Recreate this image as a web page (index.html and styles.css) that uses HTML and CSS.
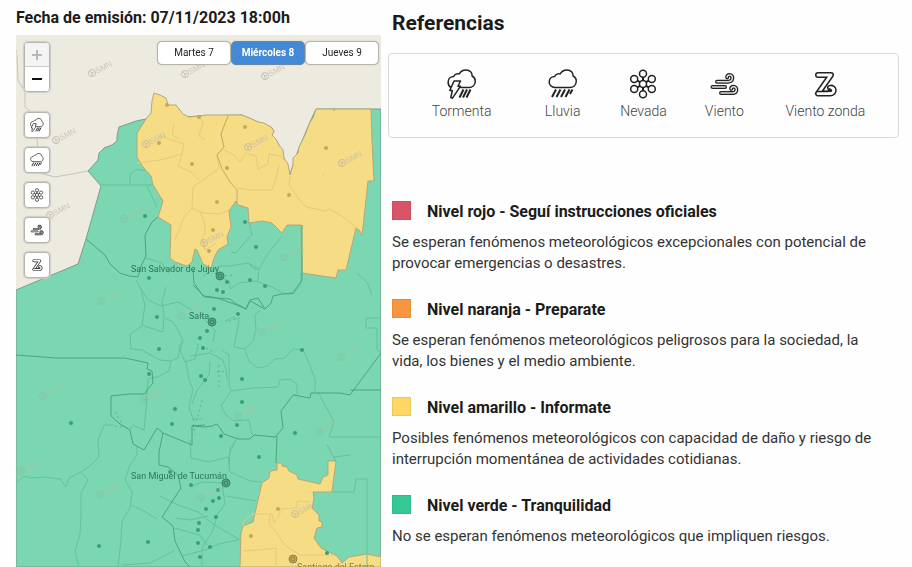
FILE: index.html
```html
<!DOCTYPE html>
<html lang="es">
<head>
<meta charset="utf-8">
<meta name="viewport" content="width=device-width, initial-scale=1">
<title>Alertas meteorológicas</title>
<link rel="stylesheet" href="styles.css">
</head>
<body>
<svg class="sprite" aria-hidden="true">
  <symbol id="i-storm" viewBox="0 0 30 30">
    <path d="M4 18.5C2 17.5 1 15 1.2 12.5C1.5 9.5 4 7.600 6.700 7.600C7.500 5.500 10 4.300 12.200 4.900C13.500 2.500 16 1 19 1C23 1 25.300 3.800 25.100 7C27.500 8.200 28.500 10.500 28.200 13C27.900 16.300 25.300 18.500 22 18.500H13.500M7 12H13.500L11 17.200H13.500L5.500 29.200L3.800 28.500L5.300 21.500H2.800Z"/>
    <path class="heavy" d="M16.500 20.500L12.500 28.500M20 20.500L16 28.500M23.500 20.500L19.500 28.500"/>
  </symbol>
  <symbol id="i-rain" viewBox="0 0 30 30">
    <path d="M6.500 18.500C3.300 18 1 15.600 1.200 12.500C1.500 9.500 4 7.600 6.700 7.600C7.500 5.500 10 4.300 12.200 4.900C13.500 2.500 16 1 19 1C23 1 25.300 3.800 25.100 7C27.500 8.200 28.500 10.500 28.200 13C27.900 16.300 25.300 18.500 22 18.500Z"/>
    <path class="heavy" d="M8 20.500L4 28M12.500 20.500L8.500 28M17 20.500L13 28M21.500 20.500L17.500 28M24.500 20.500L22 25"/>
  </symbol>
  <symbol id="i-snow" viewBox="0 0 30 30">
    <g>
      <circle cx="15" cy="15" r="3.500"/><circle cx="15" cy="4.800" r="3.500"/><circle cx="15" cy="25.200" r="3.500"/>
      <circle cx="6.200" cy="9.900" r="3.500"/><circle cx="23.800" cy="9.900" r="3.500"/>
      <circle cx="6.200" cy="20.100" r="3.500"/><circle cx="23.800" cy="20.100" r="3.500"/>
    </g>
    <path class="heavy" d="M15 8.300V11.500M15 18.500V21.700M9.200 11.600L12 13.200M20.800 11.600L18 13.200M9.200 18.400L12 16.800M20.800 18.400L18 16.800"/>
  </symbol>
  <symbol id="i-wind" viewBox="0 0 30 30">
    <g class="tube">
      <path d="M8 12.700H19C24.500 12.700 24.500 6 20.500 6C18.700 6 18 7.200 18.200 8.300"/>
      <path d="M3.500 18H16"/>
      <path d="M12 24H23.500C28.500 24 28.500 17.700 24.500 17.700C22.700 17.700 22 18.800 22.200 19.900"/>
    </g>
    <g class="tube-fill">
      <path d="M8 12.700H19C24.500 12.700 24.500 6 20.500 6C18.700 6 18 7.200 18.200 8.300"/>
      <path d="M3.500 18H16"/>
      <path d="M12 24H23.500C28.500 24 28.500 17.700 24.500 17.700C22.700 17.700 22 18.800 22.200 19.900"/>
    </g>
  </symbol>
  <symbol id="i-zonda" viewBox="0 0 30 30">
    <path class="z-line" d="M8 6H21L8 24.500H20C25.500 24.500 24.500 17.500 20 18.800"/>
    <path class="z-fill" d="M8 6H21L8 24.500H20C25.500 24.500 24.500 17.500 20 18.800"/>
    <path d="M7 22.500H18C21 22.500 21 19.500 19 19.800"/>
  </symbol>
  <symbol id="mark" viewBox="-6 -18 36 28" overflow="visible">
    <circle r="3.500"/><path d="M-2 -2L0 0V3M0 0L2 -1"/>
    <text transform="rotate(-28)" x="4" y="3">SMN</text>
  </symbol>
</svg>

<main class="page">
  <section class="alerts">
    <h2 class="issued">Fecha de emisión: 07/11/2023 18:00h</h2>
    <div class="map">
      <svg class="map-art" viewBox="16 35 365 532" preserveAspectRatio="xMidYMid slice" role="img" aria-label="Mapa de alertas">
        <path class="land-line" d="M16 54V50M17 55L18 80L25 92V107L32 113M37 137L39 173L55 177L72 174L88 171"/>
        <path class="green" d="M16 290L78 264L86 239L101 186L88 171L98 160L99 153L104 148L112 145L117 141L117 136L119 127L136 121L146 119L200 116L242 115L258 122L271 127L274 131L272 135L279 145L290 175L293 165L299 148L310 122L316 109H381V567H16Z"/>
        <path class="yellow" d="M154 93L160 95L166 98L168 105L176 105L183 114L189 117L200 116L206 115L242 115L252 119L258 122L264 123L271 127L274 131L272 135L276 139L279 145L283 150L284 158L288 164L290 175L293 165L293 158L298 153L299 147L305 135L310 122L313 118L316 109L371 109L372 140L374 181L368 181L362 236L360 231L356 228L346 270L338 270L336 278L302 273L301 225H287L282 233L272 223L262 221L249 223L248 208L238 205L236 201L229 211L231 227L227 237L228 244L218 250L214 258L211 268L203 264L197 250L195 249L192 262L187 266L175 262L170 258L171 225L158 217L163 201L153 185L151 176L143 167L137 157V133L146 119L151 113L152 101Z"/>
        <path class="yellow" d="M277 463H282V466L287 467L289 471L297 475L298 479L320 484L323 477L328 475V461H336L332 492H313L314 498L312 508L319 515V521L322 522V527L317 528L314 538L321 548L337 556L342 563L349 557L367 554L381 557V567H240L241 533L243 526L253 522L262 483L269 478L270 471L277 470Z"/>
        <path class="minor-y" d="M137 163L160 160L182 154L184 144L166 138L160 136M182 154L178 166L191 172L199 180M199 116L203 122L199 136L205 140M228 116L221 134L224 147L217 155L219 168L206 178L193 187L192 208L184 217L175 240M192 208L204 213L219 214L229 210M200 212L205 224V233L202 238L205 250L216 243M224 150L234 155L240 162L246 153L256 156L258 169L268 164L269 154L280 156L284 160M238 188L250 190L272 190L276 178L279 165M290 176L289 185L298 198L306 207L325 211L330 209L345 218L356 228M174 124L172 135L180 139M243 526V522L252 514H272L274 523L278 517L281 511M270 515L269 523L278 535L285 545L292 550L300 555H334M280 509L297 508V501L310 502M243 551L270 549L276 548V567M323 174V177"/>
        <path class="major-y" d="M228 116L221 134L224 147L217 155L222 169L230 182L237 190V203"/>
        <path class="minor" d="M101 185H153M130 185V174L137 169L145 171M147 186L157 207M146 258L162 263L169 274M136 280L141 289L148 300L161 306L178 302L192 310M141 290L145 305L142 325L150 328L163 332L164 316L162 302L166 287M142 326L130 334L131 349L142 350L160 360L171 361L178 358L180 345L183 341L178 330L173 322L165 318M171 361L169 371L157 377L148 379L146 409L144 430L132 425M183 341L180 350L185 362L195 359L198 346M186 362L189 380L193 389L189 407L193 419H203M203 276L219 266H230L248 263L259 269L267 255L281 237M249 222L252 235L244 243L237 252L231 253M248 263L254 269L259 269L258 280M220 276L230 282V289L239 283L256 281L274 288L284 294L293 294L301 284V273M260 310L255 315L256 330L253 341L245 349L234 347L239 321L234 317L225 321M245 350L249 361L258 368L267 366L275 359L285 358L293 349L303 350L309 363L315 379L315 392M222 350L229 355V385L231 391L253 388L278 387L280 380L290 379L297 384V395M231 391L221 406L226 415L234 421L249 420L252 435M200 315L210 325L215 330L213 342M190 356L210 353L223 360L226 370L227 380M210 362L209 375L197 390L192 404M114 425H104L98 440L99 457L91 465L81 472L69 478L66 487L60 479L44 477L30 478L24 476L16 483M81 472L88 480L81 493V513L80 534L75 551L79 567M137 446V455L130 465L125 480L132 492L130 508L122 521L121 540L118 567M131 505L144 511L157 519M122 565L150 563L174 551M190 440L191 458L209 462L228 457L230 472L250 481L261 482M229 455L235 442M239 436L230 448L229 470M160 496L178 505L198 512L213 524L240 540M176 518L190 520L208 516M174 528L200 535L207 545M182 556L205 550L219 544L238 540M190 487L202 482L226 483M222 483L225 504L217 515L213 530L202 548V567M226 496L250 500L256 501M334 457L350 455M330 437H381M327 445L336 461M333 492H354L356 479H367V567M366 318H381M366 318V328H377V350L381 352M357 273L367 282L372 295M318 392L326 407L334 421L329 437"/>
        <path class="dots" d="M220 276L235 275M202 400L196 422M197 344L214 352M219 365V390M240 318L225 322M217 372L227 371M193 419L195 435M115 412L124 427M132 428L113 426"/>
        <path class="major" d="M86 239L105 255L110 264L120 273L129 276L138 277L141 266L146 256L145 235L152 222L158 217M16 355L56 358H125L148 363L147 369L152 371L153 383L147 390L145 394H129L111 396V416L120 424L130 430L133 444L144 450L150 440L157 428L163 433L192 445V426L205 425M163 433L159 452V465L168 467L178 475L181 488L162 517L173 526L175 541L185 562L190 567M193 269L194 283L203 296L212 297L220 299L237 305L246 309L250 300L258 298L265 309L271 303L273 296L282 294L293 293L302 280V225M265 309L250 301L246 309L235 303L230 299L205 297L193 285M192 426L204 427L212 426L217 424L224 434L238 439L250 439L254 435L275 437L283 428L281 411L293 395L310 398L311 393L340 393L350 395L381 353M350 390H381M277 436L276 463"/>
        <g class="towns">
          <circle cx="167" cy="105" r="2"/><circle cx="199" cy="117" r="2"/><circle cx="245" cy="127" r="2"/><circle cx="334" cy="110" r="1"/><circle cx="159" cy="143" r="2"/><circle cx="192" cy="164" r="2"/><circle cx="227" cy="168" r="2"/><circle cx="326" cy="148" r="2"/><circle cx="289" cy="195" r="2"/><circle cx="217" cy="202" r="2"/><circle cx="213" cy="230" r="2"/><circle cx="209" cy="251" r="2"/><circle cx="278" cy="509" r="2"/><circle cx="251" cy="536" r="2"/>
        </g>
        <g class="towns towns-g">
          <circle cx="145" cy="216" r="2"/><circle cx="245" cy="222" r="2"/><circle cx="256" cy="247" r="2"/><circle cx="149" cy="278" r="2"/><circle cx="227" cy="282" r="2"/><circle cx="250" cy="280" r="2"/><circle cx="265" cy="286" r="2"/><circle cx="217" cy="290" r="2"/><circle cx="223" cy="292" r="2"/><circle cx="214" cy="309" r="2"/><circle cx="238" cy="314" r="2"/><circle cx="157" cy="317" r="2"/><circle cx="159" cy="349" r="2"/><circle cx="149" cy="374" r="2"/><circle cx="207" cy="331" r="2"/><circle cx="200" cy="338" r="2"/><circle cx="203" cy="348" r="2"/><circle cx="302" cy="350" r="2"/><circle cx="201" cy="376" r="2"/><circle cx="205" cy="380" r="2"/><circle cx="242" cy="379" r="2"/><circle cx="242" cy="402" r="2"/><circle cx="237" cy="425" r="2"/><circle cx="221" cy="436" r="2"/><circle cx="175" cy="409" r="2"/><circle cx="172" cy="424" r="2"/><circle cx="71" cy="423" r="2"/><circle cx="295" cy="433" r="2"/><circle cx="259" cy="457" r="2"/><circle cx="170" cy="472" r="2"/><circle cx="191" cy="485" r="2"/><circle cx="218" cy="490" r="2"/><circle cx="213" cy="501" r="2"/><circle cx="219" cy="498" r="2"/><circle cx="206" cy="509" r="2"/><circle cx="216" cy="517" r="2"/><circle cx="199" cy="523" r="2"/><circle cx="198" cy="530" r="2"/><circle cx="198" cy="543" r="2"/><circle cx="210" cy="547" r="2"/><circle cx="200" cy="557" r="2"/><circle cx="148" cy="542" r="2"/><circle cx="99" cy="546" r="2"/><circle cx="327" cy="553" r="2"/>
        </g>
        <g class="capital"><circle cx="220" cy="276" r="4"/><circle cx="220" cy="276" r="2"/><circle cx="212" cy="322" r="4"/><circle cx="212" cy="322" r="2"/><circle cx="226" cy="483" r="4"/><circle cx="226" cy="483" r="2"/></g>
        <g class="capital capital-y"><circle cx="293" cy="559" r="4"/><circle cx="293" cy="559" r="2"/></g>
        <g class="marks">
          <use href="#mark" x="86" y="55" width="36" height="28"/><use href="#mark" x="179" y="56" width="36" height="28"/><use href="#mark" x="259" y="58" width="36" height="28"/><use href="#mark" x="50" y="122" width="36" height="28"/><use href="#mark" x="140" y="126" width="36" height="28"/><use href="#mark" x="242" y="129" width="36" height="28"/><use href="#mark" x="336" y="145" width="36" height="28"/><use href="#mark" x="44" y="197" width="36" height="28"/><use href="#mark" x="198" y="225" width="36" height="28"/><use href="#mark" x="289" y="496" width="36" height="28"/>
        </g>
        <g class="marks marks-g">
          <use href="#mark" x="118" y="201" width="36" height="28"/><use href="#mark" x="278" y="239" width="36" height="28"/><use href="#mark" x="95" y="283" width="36" height="28"/><use href="#mark" x="175" y="298" width="36" height="28"/><use href="#mark" x="256" y="314" width="36" height="28"/><use href="#mark" x="335" y="339" width="36" height="28"/><use href="#mark" x="37" y="378" width="36" height="28"/><use href="#mark" x="138" y="382" width="36" height="28"/><use href="#mark" x="232" y="398" width="36" height="28"/><use href="#mark" x="313" y="413" width="36" height="28"/><use href="#mark" x="15" y="453" width="36" height="28"/><use href="#mark" x="94" y="477" width="36" height="28"/><use href="#mark" x="195" y="480" width="36" height="28"/>
        </g>
        <g class="cities">
          <text x="131" y="272">San Salvador de Jujuy</text>
          <text x="189" y="319">Salta</text>
          <text x="131" y="479">San Miguel de Tucumán</text>
          <text class="city-y" x="297" y="570">Santiago del Estero</text>
        </g>
      </svg>

      <div class="tools">
        <div class="zoom">
          <button type="button" class="zoom-btn" aria-label="Acercar" disabled><svg viewBox="0 0 12 12"><path d="M1 6H11M6 1V11"/></svg></button>
          <button type="button" class="zoom-btn" aria-label="Alejar"><svg viewBox="0 0 12 12"><path d="M1 6H11"/></svg></button>
        </div>
        <button type="button" class="tool" aria-label="Tormenta"><svg class="icon"><use href="#i-storm"/></svg></button>
        <button type="button" class="tool" aria-label="Lluvia"><svg class="icon"><use href="#i-rain"/></svg></button>
        <button type="button" class="tool" aria-label="Nevada"><svg class="icon"><use href="#i-snow"/></svg></button>
        <button type="button" class="tool" aria-label="Viento"><svg class="icon"><use href="#i-wind"/></svg></button>
        <button type="button" class="tool" aria-label="Viento zonda"><svg class="icon"><use href="#i-zonda"/></svg></button>
      </div>

      <div class="days">
        <button type="button" class="day">Martes 7</button>
        <button type="button" class="day day-on" aria-pressed="true">Miércoles 8</button>
        <button type="button" class="day">Jueves 9</button>
      </div>
    </div>
  </section>

  <section class="refs">
    <h1 class="refs-title">Referencias</h1>
    <ul class="legend">
      <li class="legend-item"><svg class="icon"><use href="#i-storm"/></svg><span>Tormenta</span></li>
      <li class="legend-item"><svg class="icon"><use href="#i-rain"/></svg><span>Lluvia</span></li>
      <li class="legend-item"><svg class="icon"><use href="#i-snow"/></svg><span>Nevada</span></li>
      <li class="legend-item"><svg class="icon"><use href="#i-wind"/></svg><span>Viento</span></li>
      <li class="legend-item"><svg class="icon"><use href="#i-zonda"/></svg><span>Viento zonda</span></li>
    </ul>
    <div class="levels">
      <article class="level">
        <h3 class="level-title"><span class="swatch red"></span>Nivel rojo - Seguí instrucciones oficiales</h3>
        <p class="level-text">Se esperan fenómenos meteorológicos excepcionales con potencial de provocar emergencias o desastres.</p>
      </article>
      <article class="level">
        <h3 class="level-title"><span class="swatch orange"></span>Nivel naranja - Preparate</h3>
        <p class="level-text">Se esperan fenómenos meteorológicos peligrosos para la sociedad, la vida, los bienes y el medio ambiente.</p>
      </article>
      <article class="level">
        <h3 class="level-title"><span class="swatch amber"></span>Nivel amarillo - Informate</h3>
        <p class="level-text">Posibles fenómenos meteorológicos con capacidad de daño y riesgo de interrupción momentánea de actividades cotidianas.</p>
      </article>
      <article class="level">
        <h3 class="level-title"><span class="swatch mint"></span>Nivel verde - Tranquilidad</h3>
        <p class="level-text">No se esperan fenómenos meteorológicos que impliquen riesgos.</p>
      </article>
    </div>
  </section>
</main>
</body>
</html>
```
FILE: styles.css
```css
* { box-sizing: border-box; }

body {
  margin: 0;
  background: #fefefe;
  color: #1b1b1b;
  font-family: Roboto, "Liberation Sans", sans-serif;
}

h1, h2, h3, p, ul { margin: 0; padding: 0; }
ul { list-style: none; }
button { font-family: inherit; padding: 0; cursor: pointer; }

.sprite { display: none; }

.page {
  display: grid;
  grid-template-columns: minmax(0, 5fr) minmax(0, 7fr);
  column-gap: 7px;
  min-height: 100vh;
  padding: 0 13px 0 16px;
}

/* Map column */
.alerts { display: flex; flex-direction: column; }
.issued {
  padding: 6px 0 5px;
  font-size: 16px;
  line-height: 24px;
  font-weight: 700;
}
.map {
  position: relative;
  flex: 1;
  overflow: hidden;
  background: #edebe0;
}
.map-art {
  position: absolute;
  inset: 0;
  width: 100%;
  height: 100%;
  fill: none;
}
.green { fill: #7bd6b2; stroke: #7b9d8c; stroke-width: 1; }
.yellow { fill: #f6dc85; stroke: #b5a878; stroke-width: 1; }
.land-line { stroke: #c6c5bb; }
.minor { stroke: #66c09e; stroke-width: 1; }
.minor-y { stroke: #e4cb7b; stroke-width: 1; }
.major-y { stroke: #c4ac66; stroke-width: 1; }
.dots { stroke: #58b28f; stroke-width: 1; stroke-dasharray: 2 3; }
.major { stroke: #4ba482; stroke-width: 1; stroke-linejoin: round; }
.towns { fill: #c4a956; }
.towns-g { fill: #3c9e79; }
.capital { stroke: #328467; stroke-width: 1; fill: #58a98b; }
.capital-y { stroke: #93803f; fill: #c4a95a; }
.marks { stroke: #b9b5a5; opacity: 0.8; }
.marks-g { stroke: #8cae98; opacity: 0.4; }
#mark text { font: 8px "Liberation Sans", sans-serif; fill: #c0bcac; stroke: none; }
.cities { font: 9px Roboto, sans-serif; fill: #2c765c; }
.city-y { fill: #8a7b43; }

/* Shared icons */
.icon {
  display: block;
  width: 30px;
  height: 30px;
  fill: none;
  stroke: #222;
  stroke-width: 1.5;
  stroke-linejoin: round;
}
.heavy { stroke-width: 2; }
.tube { stroke-width: 4; stroke-linecap: round; }
.tube-fill { stroke: #ddd; stroke-width: 1.5; stroke-linecap: round; }
.z-line { stroke-width: 6; stroke-linecap: round; }
.z-fill { stroke: #fff; stroke-width: 3; stroke-linecap: round; }

/* Map controls */
.tools {
  position: absolute;
  top: 7px;
  left: 8px;
  display: flex;
  flex-direction: column;
  gap: 9px;
}
.zoom {
  margin-bottom: 11px;
  border: 1px solid #b5b5ac;
  border-radius: 4px;
  overflow: hidden;
  box-shadow: 0 0 1px 1px #cfcec4;
}
.zoom-btn {
  display: grid;
  place-items: center;
  width: 24px;
  height: 24px;
  border: 0;
  background: #fff;
}
.zoom-btn svg { width: 12px; height: 12px; stroke: #111; stroke-width: 2; }
.zoom-btn:disabled { background: #f4f4f4; border-bottom: 1px solid #ccc; }
.zoom-btn:disabled svg { stroke: #b8b8b8; }
.tool {
  display: grid;
  place-items: center;
  width: 26px;
  height: 26px;
  border: 1px solid #b5b5ac;
  border-radius: 4px;
  background: #fff;
  box-shadow: 0 0 1px 1px #cfcec4;
}
.tool .icon { width: 14px; height: 14px; }

.days {
  position: absolute;
  top: 6px;
  right: 2px;
  left: 141px;
  display: grid;
  grid-template-columns: repeat(3, 1fr);
}
.day {
  height: 24px;
  border: 1px solid #b5b5ac;
  border-radius: 5px;
  background: #fff;
  color: #222;
  font-size: 10px;
  line-height: 12px;
  box-shadow: 0 0 1px #999;
}
.day-on { background: #4489d6; color: #fff; font-weight: 700; border-color: #6c87a5; }

/* References column */
.refs-title {
  padding: 8px 4px 15px;
  font-size: 21px;
  line-height: 30px;
  font-weight: 700;
}
.legend {
  display: grid;
  grid-template-columns: 3fr 2fr 2fr 2fr 3fr;
  padding: 15px 12px;
  border: 1px solid #d8dadd;
  border-radius: 4px;
}
.legend-item {
  display: flex;
  flex-direction: column;
  align-items: center;
  gap: 2px;
  font-size: 14px;
  line-height: 21px;
  font-weight: 300;
  color: #444;
}
.levels {
  display: grid;
  gap: 24px;
  padding: 62px 24px 0 4px;
}
.level-title {
  display: flex;
  align-items: center;
  gap: 16px;
  margin-bottom: 8px;
  font-size: 16px;
  line-height: 24px;
  font-weight: 700;
}
.swatch { flex: none; width: 19px; height: 19px; margin-bottom: 4px; border: 1px solid #0001; }
.red { background: #d95467; }
.orange { background: #f8963f; }
.amber { background: #fdd663; }
.mint { background: #35c795; }
.level-text {
  font-size: 15px;
  line-height: 21px;
  color: #333;
}
```
